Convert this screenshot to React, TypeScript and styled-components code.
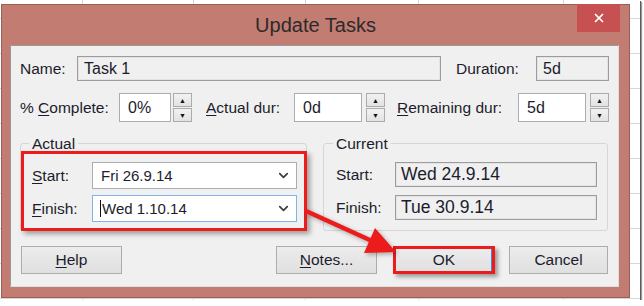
import React from "react";
import styled, { createGlobalStyle, css } from "styled-components";
import { ChevronDown, X } from "lucide-react";

const GlobalStyle = createGlobalStyle`
  html, body {
    margin: 0;
    padding: 0;
    background: #fff;
  }
  body {
    font-family: "Liberation Sans", Arial, sans-serif;
  }
`;

const gridLine = (x: number) =>
  `linear-gradient(#d6d6d6, #d6d6d6) ${x}px 0 / 1px 100% no-repeat`;

// the spreadsheet behind the dialog
const Shot = styled.div`
  position: relative;
  width: 640px;
  height: 300px;
  box-sizing: border-box;
  padding: 4px 0 0 1px;
  background: ${[82, 193, 305, 418, 563].map(gridLine).join(", ")},
    repeating-linear-gradient(
      to bottom,
      transparent 0,
      transparent 18px,
      #d6d6d6 18px,
      #d6d6d6 19px,
      transparent 19px,
      transparent 35px
    ),
    #fff;
  box-shadow: 1px 1px 0 #5c5c5c, 2px 2px 1px rgba(0, 0, 0, 0.4);
`;

const Dialog = styled.div`
  width: 629px;
  height: 294px;
  box-sizing: border-box;
  display: flex;
  flex-direction: column;
  background: #c27c72;
  border: 1px solid #9b5e56;
`;

const TitleBar = styled.div`
  height: 40px;
  flex: none;
  display: grid;
  grid-template-columns: 1fr auto 1fr;
`;

const Title = styled.div`
  grid-column: 2;
  align-self: center;
  font-size: 20px;
  color: #2b2b2b;
  padding-top: 1px;
`;

const CloseButton = styled.div`
  grid-column: 3;
  justify-self: end;
  align-self: start;
  width: 43px;
  height: 28px;
  margin: -1px 9px 0 0;
  background: #c75050;
  display: flex;
  align-items: center;
  justify-content: center;
  color: #fff;
`;

const Body = styled.div`
  flex: 1;
  display: flex;
  padding: 0 10px 10px 8px;
`;

const Panel = styled.div`
  flex: 1;
  box-sizing: border-box;
  background: #f0f0f0;
  border: 1px solid;
  border-color: #9a9a9a #dedede #dedede #9a9a9a;
  padding: 10px 9px 12px 9px;
  display: flex;
  flex-direction: column;
`;

const Row = styled.div<{ $h: number; $mt?: number }>`
  display: flex;
  align-items: center;
  height: ${(p) => p.$h}px;
  margin-top: ${(p) => p.$mt ?? 0}px;
`;

const Label = styled.div<{ $w: number; $ml?: number }>`
  width: ${(p) => p.$w}px;
  margin-left: ${(p) => p.$ml ?? 0}px;
  flex: none;
  font-size: 15.5px;
  color: #1c1c2c;
  white-space: nowrap;
  u {
    text-decoration-thickness: 1px;
    text-underline-offset: 2px;
  }
`;

const Field = styled.div<{
  $w: number;
  $h: number;
  $ro?: boolean;
  $focus?: boolean;
  $size?: number;
  $pl?: number;
}>`
  width: ${(p) => p.$w}px;
  height: ${(p) => p.$h}px;
  flex: none;
  box-sizing: border-box;
  display: flex;
  align-items: center;
  padding-left: ${(p) => p.$pl ?? 6}px;
  font-size: ${(p) => p.$size ?? 16}px;
  color: #1c1c2c;
  background: ${(p) => (p.$ro ? "#f0f0f0" : "#fff")};
  border: 1px solid
    ${(p) => (p.$focus ? "#7eb4ea" : p.$ro ? "#9c9c9c" : "#abadb3")};
  ${(p) =>
    p.$ro &&
    css`
      box-shadow: inset 0 0 0 1px #e4e4e4;
    `}
`;

const Caret = styled.span`
  width: 1px;
  height: 17px;
  background: #111;
  margin-right: 1px;
`;

const Chevron = styled.span`
  margin-left: auto;
  margin-right: 5px;
  display: flex;
  color: #3a3a3a;
`;

const Spinner = styled.div<{ $ml: number }>`
  width: 19px;
  height: 29px;
  margin-left: ${(p) => p.$ml}px;
  flex: none;
  display: flex;
  flex-direction: column;
  gap: 1px;
`;

const SpinHalf = styled.div`
  flex: 1;
  box-sizing: border-box;
  border: 1px solid #acacac;
  background: linear-gradient(#f2f2f2, #e2e2e2);
  display: flex;
  align-items: center;
  justify-content: center;
  font-size: 7px;
  color: #111;
`;

const GroupRow = styled.div`
  display: flex;
  gap: 16px;
  margin-top: 21px;
`;

const Group = styled.div<{ $w: number; $pl: number }>`
  width: ${(p) => p.$w}px;
  box-sizing: border-box;
  border: 1px solid #d6d6d6;
  border-radius: 3px;
  padding: 0 10px 8px ${(p) => p.$pl}px;
`;

const Legend = styled.div`
  width: fit-content;
  margin: -9px 0 9px -3px;
  padding: 0 3px;
  line-height: 18px;
  background: #f0f0f0;
  font-size: 15.5px;
  color: #1c1c2c;
`;

const GroupRows = styled.div<{ $gap: number }>`
  display: flex;
  flex-direction: column;
  gap: ${(p) => p.$gap}px;
`;

const ButtonRow = styled.div`
  display: flex;
  margin-top: 15px;
  height: 28px;
  padding: 0 1px;
`;

const Spacer = styled.div`
  flex: 1;
`;

const Button = styled.div<{ $w: number; $ml?: number; $marked?: boolean }>`
  width: ${(p) => p.$w}px;
  margin-left: ${(p) => p.$ml ?? 0}px;
  box-sizing: border-box;
  display: flex;
  align-items: center;
  justify-content: center;
  font-size: 15.5px;
  color: #1c1c2c;
  background: linear-gradient(#ececec, #e0e0e0);
  border: 1px solid #adadad;
  u {
    text-decoration-thickness: 1px;
    text-underline-offset: 2px;
  }
  ${(p) =>
    p.$marked &&
    css`
      border: 3px solid #ec1c1c;
      box-shadow: inset -1px 0 0 #3c8de0, 3px 3px 4px rgba(0, 0, 0, 0.35);
    `}
`;

// red annotation drawn on top of the screenshot
const MarkBox = styled.div`
  position: absolute;
  left: 21px;
  top: 151px;
  width: 286px;
  height: 80px;
  box-sizing: border-box;
  border: 3px solid #ec1c1c;
  box-shadow: 3px 3px 5px rgba(0, 0, 0, 0.35);
  pointer-events: none;
`;

const ArrowLayer = styled.svg`
  position: absolute;
  left: 0;
  top: 0;
  width: 640px;
  height: 300px;
  pointer-events: none;
  filter: drop-shadow(2px 2px 2px rgba(0, 0, 0, 0.3));
`;

const Spin = ({ ml }: { ml: number }) => (
  <Spinner $ml={ml}>
    <SpinHalf>▲</SpinHalf>
    <SpinHalf>▼</SpinHalf>
  </Spinner>
);

const App = () => {
  return (
    <>
      <GlobalStyle />
      <Shot>
        <Dialog>
          <TitleBar>
            <Title>Update Tasks</Title>
            <CloseButton>
              <X size={14} strokeWidth={3} />
            </CloseButton>
          </TitleBar>
          <Body>
            <Panel>
              <Row $h={25}>
                <Label $w={57}>Name:</Label>
                <Field $w={364} $h={25} $ro>
                  Task 1
                </Field>
                <Label $w={80} $ml={15}>
                  Duration:
                </Label>
                <Field $w={73} $h={25} $ro>
                  5d
                </Field>
              </Row>

              <Row $h={29} $mt={12}>
                <Label $w={99}>
                  % <u>C</u>omplete:
                </Label>
                <Field $w={52} $h={29} $pl={8}>
                  0%
                </Field>
                <Spin ml={2} />
                <Label $w={88} $ml={14}>
                  <u>A</u>ctual dur:
                </Label>
                <Field $w={68} $h={29} $pl={8}>
                  0d
                </Field>
                <Spin ml={4} />
                <Label $w={121} $ml={12}>
                  <u>R</u>emaining dur:
                </Label>
                <Field $w={68} $h={29} $pl={8}>
                  5d
                </Field>
                <Spin ml={4} />
              </Row>

              <GroupRow>
                <Group $w={287} $pl={11}>
                  <Legend>Actual</Legend>
                  <GroupRows $gap={6}>
                    <Row $h={27}>
                      <Label $w={60}>
                        <u>S</u>tart:
                      </Label>
                      <Field $w={205} $h={27} $size={15} $pl={8}>
                        Fri 26.9.14
                        <Chevron>
                          <ChevronDown size={15} strokeWidth={2.6} />
                        </Chevron>
                      </Field>
                    </Row>
                    <Row $h={27}>
                      <Label $w={60}>
                        <u>F</u>inish:
                      </Label>
                      <Field $w={205} $h={27} $size={15} $pl={7} $focus>
                        <Caret />
                        Wed 1.10.14
                        <Chevron>
                          <ChevronDown size={15} strokeWidth={2.6} />
                        </Chevron>
                      </Field>
                    </Row>
                  </GroupRows>
                </Group>

                <Group $w={285} $pl={12}>
                  <Legend>Current</Legend>
                  <GroupRows $gap={8}>
                    <Row $h={25}>
                      <Label $w={59}>Start:</Label>
                      <Field $w={202} $h={25} $ro $size={17.5} $pl={5}>
                        Wed 24.9.14
                      </Field>
                    </Row>
                    <Row $h={25}>
                      <Label $w={59}>Finish:</Label>
                      <Field $w={202} $h={25} $ro $size={17.5} $pl={5}>
                        Tue 30.9.14
                      </Field>
                    </Row>
                  </GroupRows>
                </Group>
              </GroupRow>

              <ButtonRow>
                <Button $w={101}>
                  <span>
                    <u>H</u>elp
                  </span>
                </Button>
                <Spacer />
                <Button $w={101}>
                  <span>
                    <u>N</u>otes...
                  </span>
                </Button>
                <Button $w={102} $ml={16} $marked>
                  OK
                </Button>
                <Button $w={99} $ml={14}>
                  Cancel
                </Button>
              </ButtonRow>
            </Panel>
          </Body>
        </Dialog>

        <MarkBox />
        <ArrowLayer viewBox="0 0 640 300">
          <line
            x1={306}
            y1={211}
            x2={372}
            y2={241}
            stroke="#ec1c1c"
            strokeWidth={4.5}
          />
          <polygon points="396,252 364,253 375,228" fill="#ec1c1c" />
        </ArrowLayer>
      </Shot>
    </>
  );
};

export default App;
